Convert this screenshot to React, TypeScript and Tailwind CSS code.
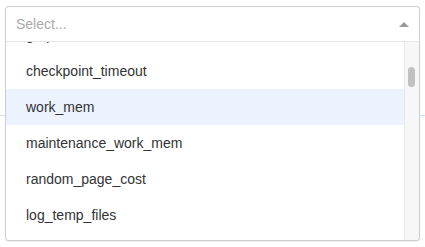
import React from 'react';

const options = [
  'geqo',
  'checkpoint_timeout',
  'work_mem',
  'maintenance_work_mem',
  'random_page_cost',
  'log_temp_files',
  'effective_cache_size',
];

export default function App() {
  const focused = 'work_mem';

  return (
    <div
      className="min-h-screen bg-white pt-[6px]"
      style={{ fontFamily: '"Liberation Sans", Arial, sans-serif' }}
    >
      <div className="relative mx-[5px]">
        {/* control */}
        <div className="flex h-[36px] items-center rounded-t-[4px] border border-b-[#e6e6e6] border-[#ccc] bg-white">
          <span className="flex-1 pl-[10px] text-[14px] text-[#aaa]">Select...</span>
          <span className="mr-[10px] h-0 w-0 border-x-[5px] border-b-[5px] border-x-transparent border-b-[#999]" />
        </div>

        {/* menu */}
        <div className="absolute left-0 right-0 top-full z-10 flex h-[199px] overflow-hidden rounded-b-[4px] border border-t-0 border-[#ccc] bg-white shadow-[0_1px_0_rgba(0,0,0,0.06)]">
          <div className="flex-1 overflow-hidden">
            <div className="-mt-[25px]">
              {options.map((opt) => (
                <div
                  key={opt}
                  className={`flex h-[36px] items-center pl-[20px] text-[14px] text-[#333] ${
                    opt === focused ? 'bg-[#ecf3fe]' : 'bg-white'
                  }`}
                >
                  {opt}
                </div>
              ))}
            </div>
          </div>
          <div className="w-[15px] border-l border-[#e8e8e8] bg-[#f7f7f7] pt-[25px]">
            <div className="ml-[3px] h-[20px] w-[7px] rounded-full bg-[#c1c1c1]" />
          </div>
        </div>
      </div>

      {/* content below the dropdown */}
      <div className="mt-[73px] h-px bg-[#cfe3f5]" />
    </div>
  );
}
